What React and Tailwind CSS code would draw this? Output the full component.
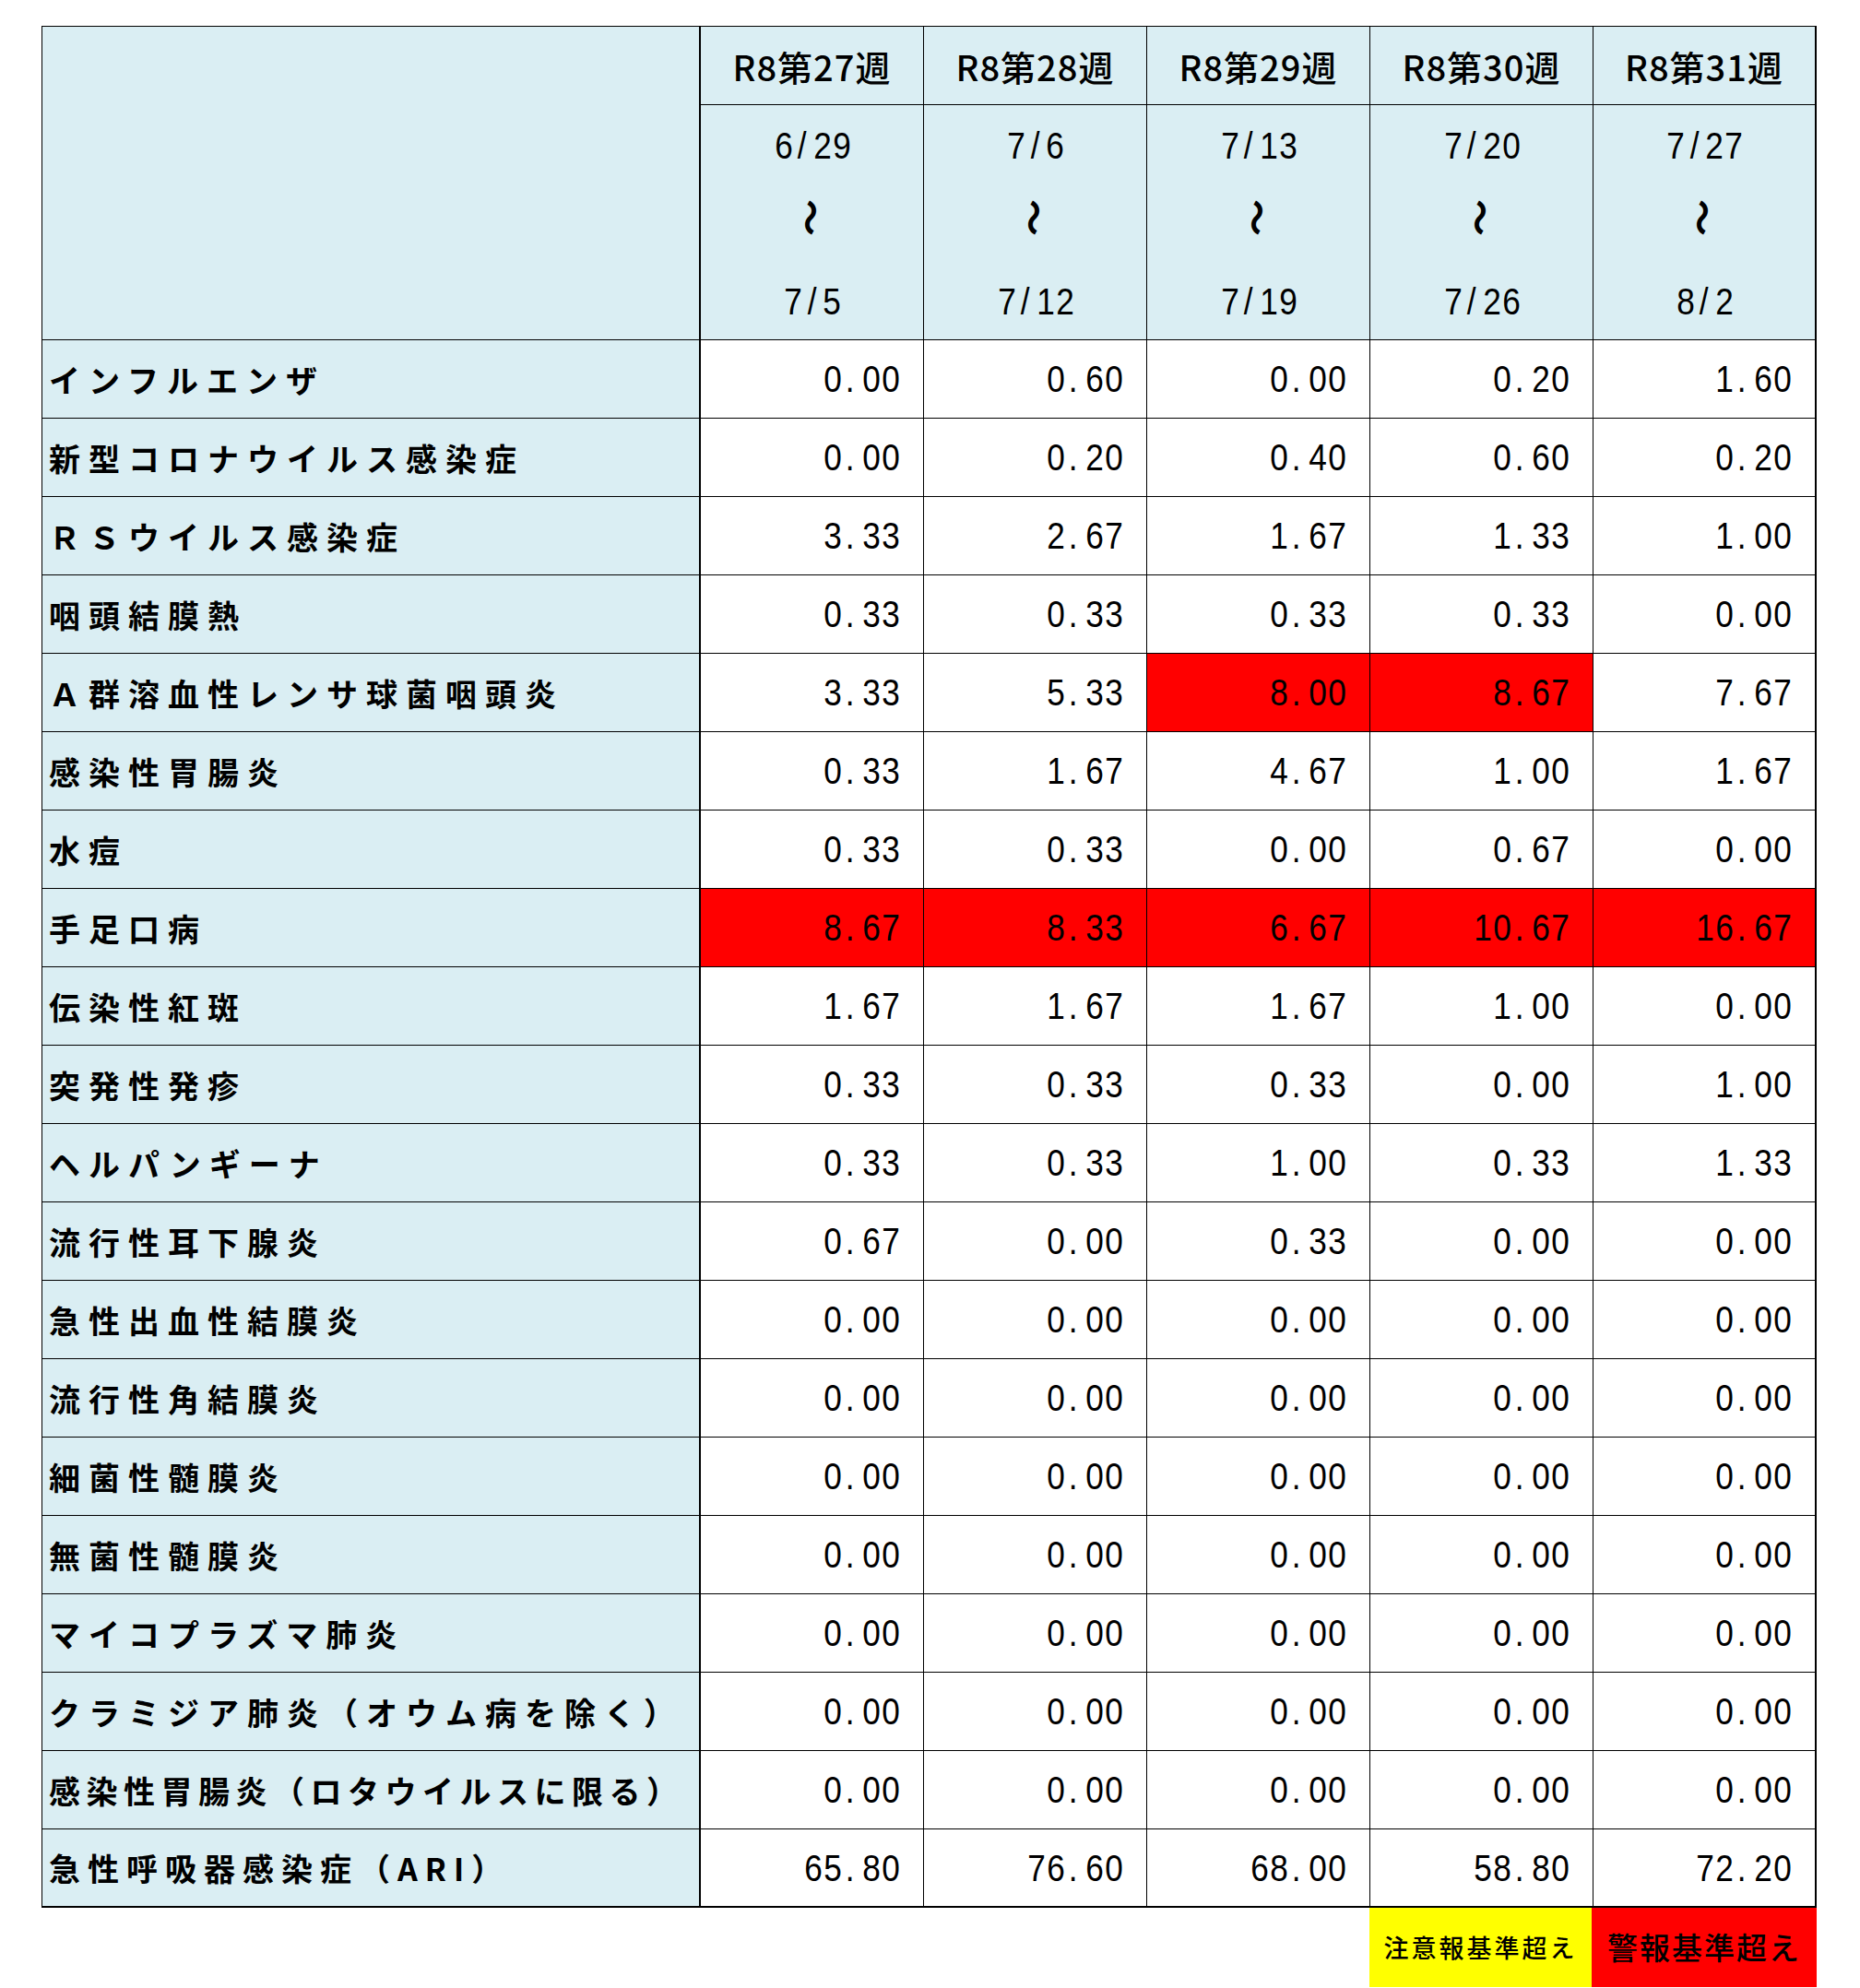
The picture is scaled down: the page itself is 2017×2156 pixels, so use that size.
import React from "react";

const weeks = [
  { w: "R8第27週", a: "6/29", b: "7/5" },
  { w: "R8第28週", a: "7/6", b: "7/12" },
  { w: "R8第29週", a: "7/13", b: "7/19" },
  { w: "R8第30週", a: "7/20", b: "7/26" },
  { w: "R8第31週", a: "7/27", b: "8/2" },
];

const Z = ["0.00", "0.00", "0.00", "0.00", "0.00"];

const rows = [
  { name: "インフルエンザ", v: ["0.00", "0.60", "0.00", "0.20", "1.60"] },
  { name: "新型コロナウイルス感染症", v: ["0.00", "0.20", "0.40", "0.60", "0.20"] },
  { name: "ＲＳウイルス感染症", v: ["3.33", "2.67", "1.67", "1.33", "1.00"] },
  { name: "咽頭結膜熱", v: ["0.33", "0.33", "0.33", "0.33", "0.00"] },
  { name: "Ａ群溶血性レンサ球菌咽頭炎", v: ["3.33", "5.33", "8.00", "8.67", "7.67"], red: [2, 3] },
  { name: "感染性胃腸炎", v: ["0.33", "1.67", "4.67", "1.00", "1.67"] },
  { name: "水痘", v: ["0.33", "0.33", "0.00", "0.67", "0.00"] },
  { name: "手足口病", v: ["8.67", "8.33", "6.67", "10.67", "16.67"], red: [0, 1, 2, 3, 4] },
  { name: "伝染性紅斑", v: ["1.67", "1.67", "1.67", "1.00", "0.00"] },
  { name: "突発性発疹", v: ["0.33", "0.33", "0.33", "0.00", "1.00"] },
  { name: "ヘルパンギーナ", v: ["0.33", "0.33", "1.00", "0.33", "1.33"] },
  { name: "流行性耳下腺炎", v: ["0.67", "0.00", "0.33", "0.00", "0.00"] },
  { name: "急性出血性結膜炎", v: Z },
  { name: "流行性角結膜炎", v: Z },
  { name: "細菌性髄膜炎", v: Z },
  { name: "無菌性髄膜炎", v: Z },
  { name: "マイコプラズマ肺炎", v: Z },
  { name: "クラミジア肺炎（オウム病を除く）", v: Z },
  { name: "感染性胃腸炎（ロタウイルスに限る）", v: Z, tight: true },
  { name: "急性呼吸器感染症（ARI）", v: ["65.80", "76.60", "68.00", "58.80", "72.20"], ari: true },
];

const Mono = ({ text }) => (
  <span className="inline-flex">
    {text.split("").map((c, i) => (
      <span
        key={i}
        className={c === "." ? "inline-block w-[21px] text-left pl-[3px]" : "inline-block w-[21px] text-center"}
      >
        <span className="inline-block scale-x-[0.88]">{c}</span>
      </span>
    ))}
  </span>
);

const jp = { fontFamily: '"Noto Sans CJK JP", "Noto Sans", sans-serif' };
const num = { fontFamily: '"Liberation Sans", Arial, sans-serif' };

export default function App() {
  return (
    <div className="min-h-screen bg-white text-black" style={jp}>
      <div className="pl-[45px] pt-[28px]">
        <div className="grid w-[1925px] grid-cols-[714px_repeat(5,242px)] border-l border-t border-black">
          <div className="row-span-2 border-b border-r-2 border-black bg-[#DAEEF3]" />
          {weeks.map((wk, i) => (
            <div
              key={"w" + i}
              className={
                "flex h-[85px] items-center justify-center border-b border-black bg-[#DAEEF3] text-[38px] font-medium tracking-[1px] " +
                (i === 4 ? "border-r-2" : "border-r")
              }
            >
              {wk.w}
            </div>
          ))}
          {weeks.map((wk, i) => (
            <div
              key={"d" + i}
              className={
                "flex h-[255px] flex-col items-center border-b border-black bg-[#DAEEF3] text-[40px] leading-[40px] " +
                (i === 4 ? "border-r-2" : "border-r")
              }
              style={num}
            >
              <div className="mt-[24px] h-[40px]">
                <Mono text={wk.a} />
              </div>
              <div className="mt-[38px] flex h-[40px] items-center justify-center">
                <span className="inline-block rotate-90 text-[40px] font-bold" style={jp}>〜</span>
              </div>
              <div className="mt-[51px] h-[40px]">
                <Mono text={wk.b} />
              </div>
            </div>
          ))}
          {rows.map((r, ri) => {
            const last = ri === rows.length - 1;
            return (
              <React.Fragment key={"r" + ri}>
                <div
                  className={
                    "flex h-[85px] items-center border-r-2 border-black bg-[#DAEEF3] pl-[7px] text-[34px] font-bold " +
                    (r.tight ? "tracking-[6.5px] " : r.ari ? "tracking-[8px] " : "tracking-[9px] ") +
                    (last ? "border-b-2" : "border-b")
                  }
                >
                  {r.name}
                </div>
                {r.v.map((val, ci) => {
                  const isRed = r.red && r.red.includes(ci);
                  return (
                    <div
                      key={ci}
                      className={
                        "flex h-[85px] items-center justify-end border-black pr-[25px] text-[40px] " +
                        (isRed ? "bg-[#FF0000] " : "bg-white ") +
                        (ci === 4 ? "border-r-2 " : "border-r ") +
                        (last ? "border-b-2" : "border-b")
                      }
                      style={num}
                    >
                      <Mono text={val} />
                    </div>
                  );
                })}
              </React.Fragment>
            );
          })}
        </div>
        <div className="flex w-[1925px] justify-end">
          <div className="flex h-[86px] w-[241px] items-center justify-center bg-[#FFFF00] text-[27px] font-medium tracking-[3px]">
            注意報基準超え
          </div>
          <div className="flex h-[86px] w-[244px] items-center justify-center bg-[#FF0000] text-[33px] font-medium tracking-[2px]">
            警報基準超え
          </div>
        </div>
      </div>
    </div>
  );
}
